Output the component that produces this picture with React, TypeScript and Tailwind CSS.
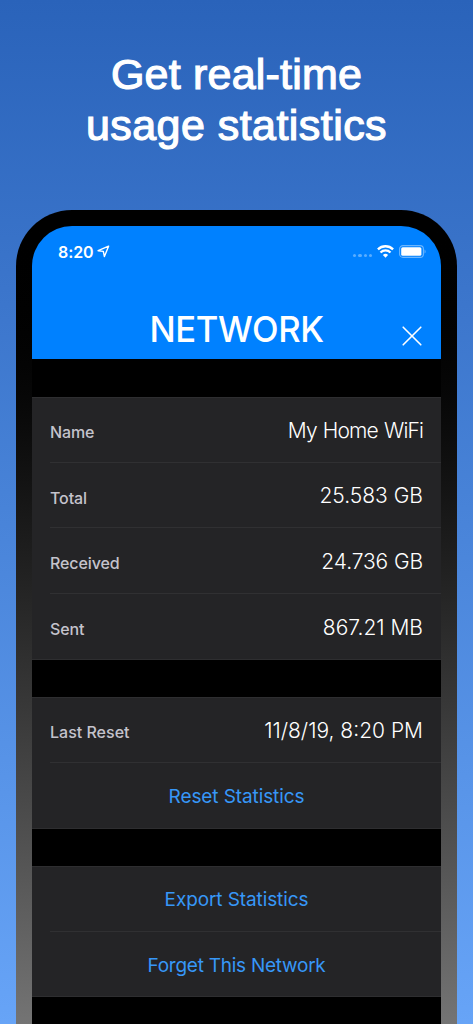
import { clsx } from "clsx";

type Row = { label: string; value: string; valueClass: string; labelClass: string };

const USAGE: Row[] = [
  { label: "Name",     value: "My Home WiFi", labelClass: "tracking-[-0.1px]", valueClass: "tracking-[-0.85px] [word-spacing:1px]" },
  { label: "Total",    value: "25.583 GB",    labelClass: "tracking-[-0.1px]", valueClass: "tracking-[0px]" },
  { label: "Received", value: "24.736 GB",    labelClass: "tracking-[-0.1px]", valueClass: "tracking-[-0.1px]" },
  { label: "Sent",     value: "867.21 MB",    labelClass: "tracking-[-0.1px]", valueClass: "tracking-[0px]" },
];

const LAST_RESET: Row = { label: "Last Reset", value: "11/8/19, 8:20 PM", labelClass: "tracking-[0px]", valueClass: "tracking-[0px]" };

function LocationIcon() {
  return (
    <svg width="13" height="13" viewBox="0 0 13 13" fill="none" stroke="white" strokeWidth="1.4" strokeLinejoin="round">
      <path d="M11.6 1.2 1.1 5.7 6.3 6.4 7.4 11.5Z"/>
    </svg>
  );
}

function WifiIcon() {
  return (
    <svg width="17" height="13" viewBox="0 0 17 13" fill="none" stroke="white" strokeWidth="2.3">
      <path d="M0.9 4.4a10.8 10.8 0 0 1 15.2 0"/>
      <path d="M3.5 7.5a7.1 7.1 0 0 1 10 0"/>
      <path d="M8.5 12.8 5.9 10.1a3.7 3.7 0 0 1 5.2 0Z" fill="white" stroke="none"/>
    </svg>
  );
}

function BatteryIcon() {
  return (
    <svg width="27" height="13" viewBox="0 0 27 13" fill="none">
      <rect x="0.6" y="0.6" width="23.8" height="11.8" rx="3.4" stroke="white" strokeOpacity="0.42" strokeWidth="1.1"/>
      <rect x="2.2" y="2.2" width="20.2" height="8.6" rx="1.5" fill="white"/>
      <path d="M25.6 4.4c1.2.6 1.2 3.6 0 4.2Z" fill="white" fillOpacity="0.5"/>
    </svg>
  );
}

function CloseIcon() {
  return (
    <svg width="20" height="20" viewBox="0 0 20 20" stroke="white" strokeWidth="1.6" strokeLinecap="round">
      <path d="M1.2 1.2 18.8 18.8M18.8 1.2 1.2 18.8"/>
    </svg>
  );
}

function Divider() {
  return <div className="ml-[18px] h-px bg-[#303032]"/>;
}

function StatRow({ row, last }: { row: Row; last?: boolean }) {
  return (
    <div className="h-[65.6px] flex flex-col">
      <div className="flex-1 flex items-center justify-between px-[18px]">
        <span className={clsx("text-[16px] leading-5 font-[450] text-[#c4c3cc] pt-[5px]", row.labelClass)}>{row.label}</span>
        <span className={clsx("text-[21px] leading-6 font-light text-white pt-[2px]", row.valueClass)}>{row.value}</span>
      </div>
      {!last&&<Divider/>}
    </div>
  );
}

function ActionRow({ children, last, className }: { children: string; last?: boolean; className?: string }) {
  return (
    <div className="h-[65.6px] flex flex-col">
      <button className={clsx("flex-1 pt-[2px] text-[19px] leading-6 text-[#3797f7] text-center", className)}>{children}</button>
      {!last&&<Divider/>}
    </div>
  );
}

function Section({ children }: { children: React.ReactNode }) {
  return <section className="bg-[#242426] shadow-[inset_0_1px_0_#2e2e30,inset_0_-1px_0_#2e2e30]">{children}</section>;
}

export default function App() {
  return (
    <div className="w-[473px] h-[1024px] overflow-hidden bg-linear-to-b from-[#2a63ba] to-[#67a4f7] font-['Inter',sans-serif]">
      <h1 className="h-[210px] pt-[49px] text-center text-white font-['Liberation_Sans',sans-serif] text-[43px] leading-[51px] [-webkit-text-stroke:1.2px_white]">
        <span className="tracking-[0.2px]">Get real-time</span><br/>
        <span className="tracking-[0.45px]">usage statistics</span>
      </h1>

      {/* Phone */}
      <div className="mx-4 h-[830px] rounded-t-[56px] bg-linear-to-b from-black from-0% to-[#747474] to-[98%] px-4 pt-4">
        <div className="h-[814px] overflow-hidden rounded-t-[40px] bg-black">
          <header className="h-[133px] bg-[#0081ff] text-white">
            <div className="flex items-center h-[51px] pl-[26px] pr-[15px]">
              <span className="text-[16px] font-semibold leading-5 tracking-[-0.1px]">8:20</span>
              <span className="ml-1"><LocationIcon/></span>
              <div className="ml-auto flex items-center gap-[5px]">
                <div className="flex gap-[2px] pt-[8px]">
                  {[0,1,2,3].map(i=><span key={i} className="size-[3.2px] rounded-full bg-white/35"/>)}
                </div>
                <WifiIcon/>
                <BatteryIcon/>
              </div>
            </div>
            <div className="relative h-[82px] flex justify-center pt-[30px]">
              <h2 className="text-[36px] leading-[44px] font-[480] tracking-[-0.4px] scale-x-[0.962]">NETWORK</h2>
              <button className="absolute right-[19px] top-[49px]"><CloseIcon/></button>
            </div>
          </header>

          <div className="flex flex-col gap-[37.7px] pt-[38.3px]">
            <Section>
              {USAGE.map((r,i)=><StatRow key={r.label} row={r} last={i===USAGE.length-1}/>)}
            </Section>
            <Section>
              <StatRow row={LAST_RESET}/>
              <ActionRow last className="tracking-[-0.1px]">Reset Statistics</ActionRow>
            </Section>
            <Section>
              <ActionRow className="tracking-[-0.1px]">Export Statistics</ActionRow>
              <ActionRow last className="tracking-[-0.25px]">Forget This Network</ActionRow>
            </Section>
          </div>
        </div>
      </div>
    </div>
  );
}
